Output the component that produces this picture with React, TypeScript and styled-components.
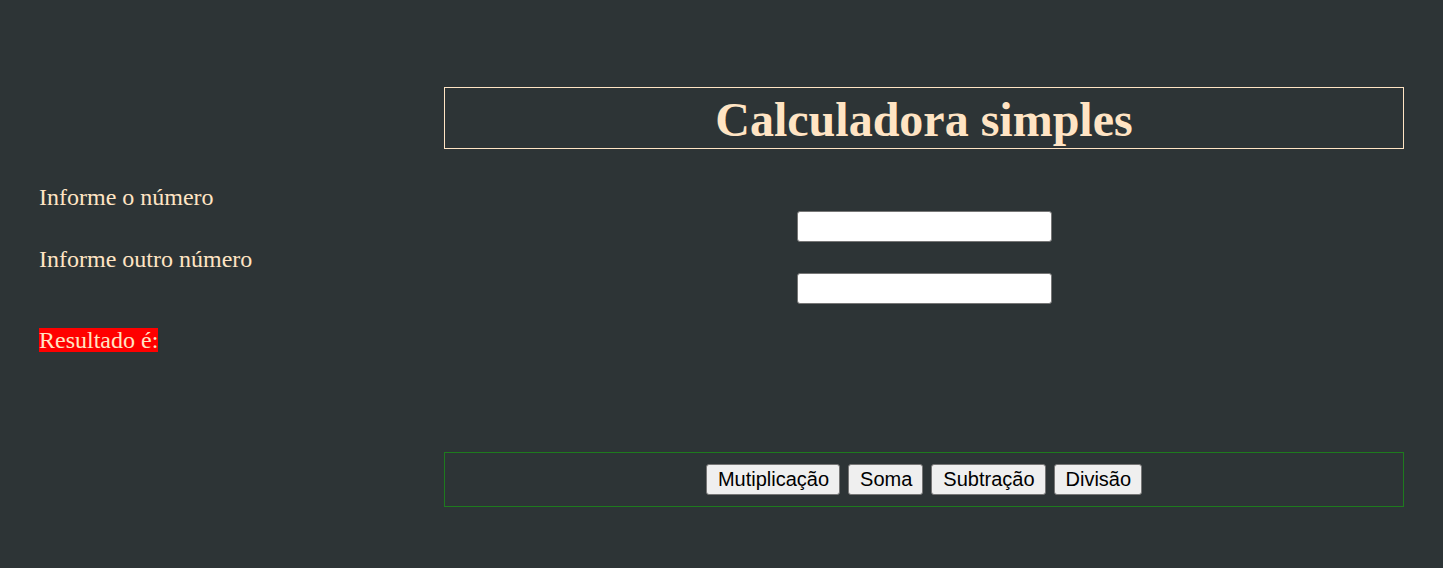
import React from "react";
import styled, { createGlobalStyle } from "styled-components";

const Global = createGlobalStyle`
  html, body { margin: 0; padding: 0; background: #2d3436; }
  body { font-family: "Liberation Serif", "Times New Roman", serif; color: #ffe4c4; }
`;

const Page = styled.div`
  display: flex;
  padding: 87px 39px 0 39px;
  height: 568px;
  box-sizing: border-box;
`;

const LeftColumn = styled.div`
  width: 405px;
  flex: none;
  display: flex;
  flex-direction: column;
  align-items: flex-start;
  padding-top: 96px;
`;

const Label = styled.label<{ $gap: number }>`
  font-size: 24px;
  line-height: 28px;
  margin-bottom: ${(p) => p.$gap}px;
`;

const Result = styled.span`
  display: inline-block;
  font-size: 24px;
  line-height: 24px;
  background: #ff0000;
  color: #ffe4c4;
`;

const RightColumn = styled.div`
  flex: 1;
  display: flex;
  flex-direction: column;
`;

const Title = styled.h1`
  margin: 0;
  border: 1px solid #ffe4c4;
  text-align: center;
  font-size: 48px;
  font-weight: bold;
  line-height: 56px;
  padding: 4px 0 0;
  color: #ffe4c4;
`;

const Inputs = styled.div`
  display: flex;
  flex-direction: column;
  align-items: center;
  gap: 31px;
  margin-top: 62px;
`;

const NumberInput = styled.input`
  width: 255px;
  height: 31px;
  box-sizing: border-box;
  background: #ffffff;
  border: 1px solid #767676;
  border-radius: 3px;
  padding: 1px 2px;
  font-size: 16px;
`;

const ButtonBar = styled.div`
  margin-top: 148px;
  border: 1px solid #1e7a1e;
  height: 55px;
  box-sizing: border-box;
  display: flex;
  align-items: center;
  justify-content: center;
  gap: 8px;
`;

const OpButton = styled.button`
  font-family: "Liberation Sans", Arial, sans-serif;
  font-size: 20px;
  line-height: 23px;
  padding: 3px 10px 3px 11px;
  background: #efefef;
  color: #000;
  border: 1px solid #767676;
  border-radius: 3px;
`;

export default function App() {
  return (
    <>
      <Global />
      <Page>
        <LeftColumn>
          <Label $gap={34}>Informe o número</Label>
          <Label $gap={55}>Informe outro número</Label>
          <Result>Resultado é:</Result>
        </LeftColumn>
        <RightColumn>
          <Title>Calculadora simples</Title>
          <Inputs>
            <NumberInput type="number" />
            <NumberInput type="number" />
          </Inputs>
          <ButtonBar>
            <OpButton>Mutiplicação</OpButton>
            <OpButton>Soma</OpButton>
            <OpButton>Subtração</OpButton>
            <OpButton>Divisão</OpButton>
          </ButtonBar>
        </RightColumn>
      </Page>
    </>
  );
}
